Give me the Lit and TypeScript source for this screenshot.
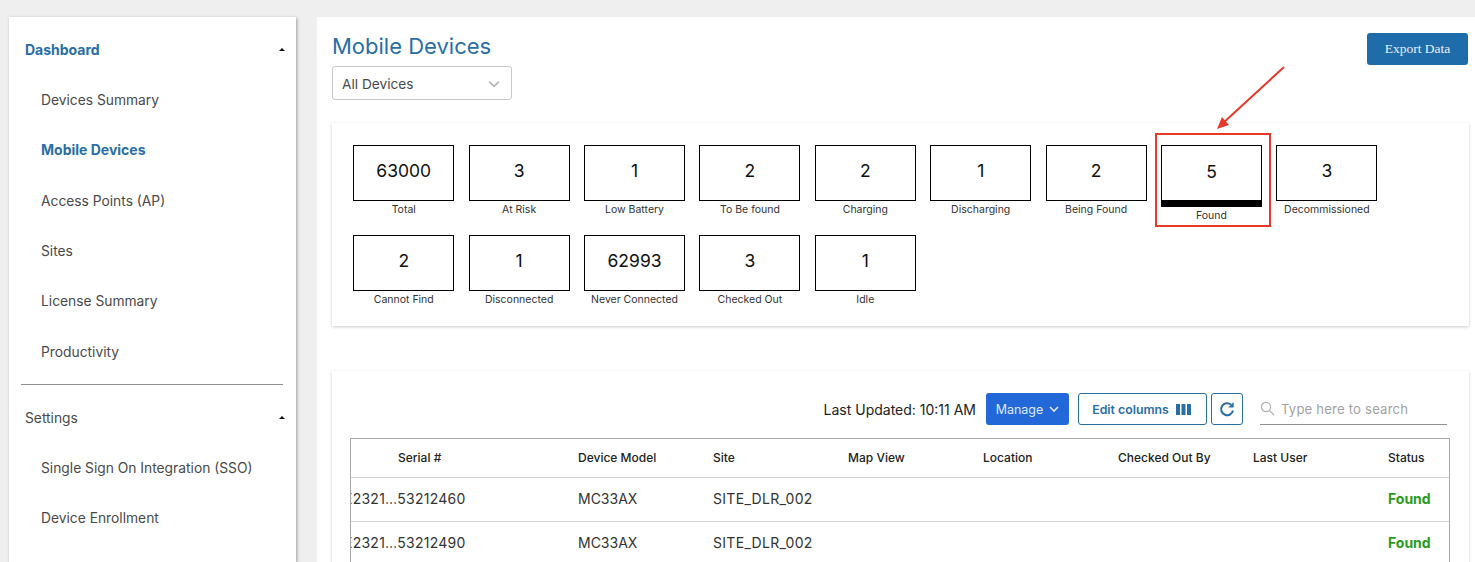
import { LitElement, html, css, svg } from 'lit';
import { customElement } from 'lit/decorators.js';

const TILES = [
  ['63000', 'Total'],
  ['3', 'At Risk'],
  ['1', 'Low Battery'],
  ['2', 'To Be found'],
  ['2', 'Charging'],
  ['1', 'Discharging'],
  ['2', 'Being Found'],
  ['5', 'Found'],
  ['3', 'Decommissioned'],
  ['2', 'Cannot Find'],
  ['1', 'Disconnected'],
  ['62993', 'Never Connected'],
  ['3', 'Checked Out'],
  ['1', 'Idle'],
];

const COLUMNS = ['Serial #', 'Device Model', 'Site', 'Map View', 'Location', 'Checked Out By', 'Last User', 'Status'];

const ROWS = [
  { serial: 'E2321…53212460', model: 'MC33AX', site: 'SITE_DLR_002', status: 'Found' },
  { serial: 'E2321…53212490', model: 'MC33AX', site: 'SITE_DLR_002', status: 'Found' },
];

@customElement('app-root')
export class AppRoot extends LitElement {
  static styles = css`
    :host {
      display: block;
      position: relative;
      height: 562px;
      overflow: hidden;
      background: #efefef;
      font-family: Inter, 'Noto Sans', sans-serif;
      color: #4a4a4a;
    }

    .page {
      display: flex;
      align-items: flex-start;
      gap: 21px;
      padding: 17px 0 0 9px;
    }

    .sidebar {
      flex: none;
      width: 287px;
      height: 545px;
      background: #fff;
      box-shadow: 1px 1px 3px rgb(0 0 0 / 0.35);
      font-size: 13.8px;
      padding-top: 8px;
      box-sizing: border-box;
    }

    .nav-head {
      display: flex;
      align-items: center;
      justify-content: space-between;
      height: 50px;
      padding: 0 11px 0 16px;
      box-sizing: border-box;
    }

    .nav-item {
      display: flex;
      align-items: center;
      height: 50.3px;
      padding-left: 32px;
      box-sizing: border-box;
    }

    .active {
      color: #2a6ea6;
      font-size: 14px;
      font-weight: 700;
    }

    .nav-item.active,
    .nav-head.active {
      padding-bottom: 1px;
    }

    .caret {
      width: 0;
      height: 0;
      border-left: 3px solid transparent;
      border-right: 3px solid transparent;
      border-bottom: 3px solid #111;
    }

    .divider {
      height: 1px;
      background: #8f8f8f;
      margin: 7px 13px 8px 12px;
    }

    .main {
      flex: 1;
      min-width: 0;
      height: 545px;
      background: #fff;
      padding: 12px 6px 0 15px;
      box-sizing: border-box;
    }

    .head {
      display: flex;
      justify-content: space-between;
      align-items: flex-start;
      padding-right: 1px;
    }

    h1 {
      margin: 0 0 3px;
      font: 400 22px/34px Inter, sans-serif;
      color: #2a6ea6;
    }

    .select {
      display: flex;
      align-items: center;
      justify-content: space-between;
      width: 180px;
      height: 34px;
      padding: 1px 11px 0 9px;
      box-sizing: border-box;
      border: 1px solid #c8c8c8;
      border-radius: 3px;
      font-size: 13.7px;
    }

    .export {
      margin-top: 4px;
      width: 101px;
      height: 32px;
      border: 0;
      border-radius: 3px;
      background: #1f6cab;
      color: #e8f1f8;
      font: 13.5px 'Liberation Serif', serif;
    }

    .card {
      background: #fff;
      box-shadow: 0 1px 3px rgb(0 0 0 / 0.2);
    }

    .tiles {
      margin-top: 23px;
      height: 203px;
      box-sizing: border-box;
      padding: 22px 21px 0 21.25px;
      display: grid;
      grid-template-columns: repeat(9, 101px);
      grid-auto-rows: 90px;
      column-gap: 14.4px;
      color: #111;
    }

    .box {
      height: 56px;
      box-sizing: border-box;
      border: 1px solid #000;
      padding-bottom: 5px;
      display: flex;
      align-items: center;
      justify-content: center;
      font: 17.5px Inter, sans-serif;
    }

    .tile.selected .box {
      height: 62px;
      border-bottom-width: 7px;
      padding-bottom: 4px;
    }

    .label {
      margin-top: 2px;
      text-align: center;
      font-size: 10.5px;
      line-height: 14px;
      color: #333;
    }

    .list {
      margin-top: 45px;
      height: 300px;
      padding: 22px 19px 0 18px;
    }

    .toolbar {
      display: flex;
      align-items: center;
      height: 32px;
    }

    .updated {
      margin-left: auto;
      margin-right: 10px;
      font-size: 14px;
      color: #222;
    }

    .btn {
      display: flex;
      align-items: center;
      justify-content: center;
      gap: 6px;
      box-sizing: border-box;
      height: 32px;
      border-radius: 3px;
      font: 400 12.5px Inter, sans-serif;
    }

    .manage {
      width: 83px;
      background: #2268d8;
      color: #dfe9fb;
      margin-right: 9px;
    }

    .outline {
      border: 1px solid #2a6ea6;
      color: #2a6ea6;
    }

    .edit {
      width: 129px;
      margin-right: 4px;
      gap: 7px;
      padding-right: 2px;
      font-size: 12.3px;
      font-weight: 600;
    }

    .refresh {
      width: 32px;
      margin-right: 17px;
    }

    .search {
      display: flex;
      align-items: center;
      gap: 6px;
      width: 187px;
      height: 32px;
      margin-right: 3px;
      box-sizing: border-box;
      border-bottom: 1px solid #8f8f8f;
      font-size: 13.1px;
      color: #a2a2a2;
      letter-spacing: 0.2px;
    }

    .table {
      margin-top: 13px;
      height: 140px;
      overflow: hidden;
      border: 1px solid #a8a8a8;
      border-bottom: 0;
    }

    .row {
      display: grid;
      grid-template-columns: 180px repeat(7, 135px);
      padding: 0 0 1px 47px;
      align-items: center;
      height: 44px;
      border-bottom: 1px solid #d4d4d4;
      box-sizing: border-box;
      font-size: 14px;
      line-height: 18px;
      color: #333;
      white-space: nowrap;
    }

    .row.header {
      height: 39px;
      font-size: 12px;
      font-weight: 500;
      color: #222;
    }

    .serial {
      margin-left: -54px;
      letter-spacing: 0.25px;
    }

    .site {
      letter-spacing: 0.3px;
    }

    .status {
      color: #2a9d1f;
      font-weight: 700;
    }

    .annotation {
      position: absolute;
      left: 1155px;
      top: 133px;
      width: 116px;
      height: 94px;
      box-sizing: border-box;
      border: 2px solid #e8392a;
    }

    .arrow {
      position: absolute;
      left: 1210px;
      top: 60px;
    }
  `;

  private chevron(color: string, size = 10, width = 1.4) {
    return html`<svg width=${size} height=${size} viewBox="0 0 10 10" fill="none" stroke=${color} stroke-width=${width}>
      ${svg`<path d="M1 3l4 4 4-4" />`}
    </svg>`;
  }

  private tile(value: string, label: string) {
    const selected = label === 'Found';
    return html`<div class="tile ${selected ? 'selected' : ''}">
      <div class="box">${value}</div>
      <div class="label">${label}</div>
    </div>`;
  }

  render() {
    return html`
      <div class="page">
        <nav class="sidebar">
          <div class="nav-head active">Dashboard <span class="caret"></span></div>
          <div class="nav-item">Devices Summary</div>
          <div class="nav-item active">Mobile Devices</div>
          <div class="nav-item">Access Points (AP)</div>
          <div class="nav-item">Sites</div>
          <div class="nav-item">License Summary</div>
          <div class="nav-item">Productivity</div>
          <div class="divider"></div>
          <div class="nav-head">Settings <span class="caret"></span></div>
          <div class="nav-item">Single Sign On Integration (SSO)</div>
          <div class="nav-item">Device Enrollment</div>
        </nav>

        <main class="main">
          <div class="head">
            <div>
              <h1>Mobile Devices</h1>
              <div class="select">All Devices ${this.chevron('#b5b5b5', 12)}</div>
            </div>
            <button class="export">Export Data</button>
          </div>

          <section class="card tiles">${TILES.map(([v, l]) => this.tile(v, l))}</section>

          <section class="card list">
            <div class="toolbar">
              <span class="updated">Last Updated: 10:11 AM</span>
              <div class="btn manage">Manage ${this.chevron('#dfe9fb', 10, 1.6)}</div>
              <div class="btn outline edit">
                Edit columns
                <svg width="15" height="11" viewBox="0 0 15 11" fill="#2a6ea6">
                  <rect x="0" width="4" height="11" /><rect x="5.5" width="4" height="11" /><rect x="11" width="4" height="11" />
                </svg>
              </div>
              <div class="btn outline refresh">
                <svg width="18" height="18" viewBox="0 0 18 18" fill="none" stroke="#2a6ea6" stroke-width="2">
                  <path d="M15 10.5A6 6 0 1 1 13 4.6" />
                  <path d="M15.6 2v5.4h-5.4z" fill="#2a6ea6" stroke="none" />
                </svg>
              </div>
              <div class="search">
                <svg width="15" height="15" viewBox="0 0 15 15" fill="none" stroke="#b0b0b0" stroke-width="1.2">
                  <circle cx="6" cy="6" r="4.6" /><path d="M9.5 9.5l4.5 4.5" />
                </svg>
                Type here to search
              </div>
            </div>

            <div class="table">
              <div class="row header">${COLUMNS.map((c) => html`<span>${c}</span>`)}</div>
              ${ROWS.map(
                (r) => html`<div class="row">
                  <span class="serial">${r.serial}</span>
                  <span>${r.model}</span>
                  <span class="site">${r.site}</span>
                  <span></span><span></span><span></span><span></span>
                  <span class="status">${r.status}</span>
                </div>`,
              )}
            </div>
          </section>
        </main>
      </div>

      <div class="annotation"></div>
      <svg class="arrow" width="80" height="75" viewBox="0 0 80 75">
        <path d="M74 7L12 64" stroke="#e8392a" stroke-width="2" fill="none" />
        <path d="M7 69l5-12 7 8z" fill="#e8392a" />
      </svg>
    `;
  }
}
